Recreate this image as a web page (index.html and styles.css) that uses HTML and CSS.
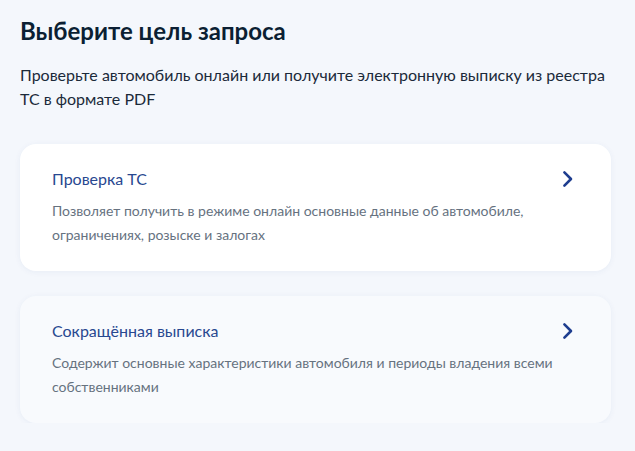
FILE: index.html
```html
<!DOCTYPE html>
<html lang="ru">
<head>
<meta charset="utf-8">
<title>Выберите цель запроса</title>
<link rel="stylesheet" href="styles.css">
</head>
<body>
<main class="page">
  <h1 class="page-title">Выберите цель запроса</h1>
  <p class="page-lead">Проверьте автомобиль онлайн или получите электронную выписку из реестра ТС в формате PDF</p>

  <div class="options">
    <a class="option" href="#">
      <div class="option-body">
        <div class="option-title">Проверка ТС</div>
        <div class="option-text">Позволяет получить в режиме онлайн основные данные об автомобиле, ограничениях, розыске и залогах</div>
      </div>
      <svg class="option-arrow" width="24" height="24" viewBox="0 0 24 24" aria-hidden="true">
        <path d="M9.4 5.4l6.6 6.6-6.6 6.6" fill="none" stroke="currentColor" stroke-width="2.6" stroke-linecap="round" stroke-linejoin="round"/>
      </svg>
    </a>

    <a class="option option-hover" href="#">
      <div class="option-body">
        <div class="option-title">Сокращённая выписка</div>
        <div class="option-text">Содержит основные характеристики автомобиля и периоды владения всеми собственниками</div>
      </div>
      <svg class="option-arrow" width="24" height="24" viewBox="0 0 24 24" aria-hidden="true">
        <path d="M9.4 5.4l6.6 6.6-6.6 6.6" fill="none" stroke="currentColor" stroke-width="2.6" stroke-linecap="round" stroke-linejoin="round"/>
      </svg>
    </a>
  </div>
</main>
</body>
</html>
```

FILE: styles.css
```css
html, body {
  margin: 0;
  padding: 0;
}

body {
  background: #f4f7fc;
  font-family: Lato, "Noto Sans", sans-serif;
  color: #0b1f33;
}

.page {
  padding: 15px 24px 0 20px;
}

.page-title {
  margin: 0;
  font-size: 24px;
  line-height: 32px;
  font-weight: 700;
  color: #0b1f33;
}

.page-lead {
  margin: 16px 0 0;
  font-size: 16px;
  line-height: 24px;
  color: #1b2a3a;
}

.options {
  display: flex;
  flex-direction: column;
  gap: 25px;
  margin-top: 33px;
}

.option {
  display: flex;
  align-items: flex-start;
  padding: 23px 32px 24px 32px;
  background: #ffffff;
  border-radius: 16px;
  box-shadow: 0 1px 6px rgba(30, 60, 130, 0.06);
  text-decoration: none;
}

.option-hover {
  background: #f8fafd;
}

.option-body {
  flex: 1;
  min-width: 0;
}

.option-title {
  font-size: 16px;
  line-height: 24px;
  color: #284890;
}

.option-text {
  margin-top: 8px;
  font-size: 14px;
  line-height: 24px;
  color: #66727f;
}

.option-arrow {
  flex: none;
  color: #1e3d8f;
}
```
